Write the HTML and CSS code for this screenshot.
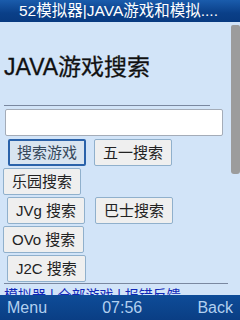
FILE: index.html
```html
<!DOCTYPE html>
<html>
<head>
<meta charset="utf-8">
<link rel="stylesheet" href="styles.css">
</head>
<body>
<div class="screen">
  <div class="titlebar">52模拟器|JAVA游戏和模拟....</div>
  <div class="viewport">
    <div class="content">
      <h1 class="heading">JAVA游戏搜索</h1>
      <div class="rule rule-top"></div>
      <div class="search-field"></div>
      <div class="row row-1">
        <span class="btn btn-focus">搜索游戏</span>
        <span class="btn btn-second">五一搜索</span>
      </div>
      <div class="row row-2">
        <span class="btn">乐园搜索</span>
      </div>
      <div class="row row-3">
        <span class="btn">JVg 搜索</span>
        <span class="btn btn-third">巴士搜索</span>
      </div>
      <div class="row row-4">
        <span class="btn">OVo 搜索</span>
      </div>
      <div class="row row-5">
        <span class="btn">J2C 搜索</span>
      </div>
      <div class="rule rule-bottom"></div>
      <div class="links"><span class="link">模拟器</span> | <span class="link">全部游戏</span> | <span class="link">报错反馈</span></div>
    </div>
    <div class="scrollbar"><div class="thumb"></div></div>
  </div>
  <div class="softkeys">
    <span class="key">Menu</span>
    <span class="clock">07:56</span>
    <span class="key">Back</span>
  </div>
</div>
</body>
</html>
```
FILE: styles.css
```css
html, body {
  margin: 0;
  padding: 0;
}
body {
  width: 240px;
  height: 320px;
  overflow: hidden;
  font-family: "Liberation Sans", "Noto Sans CJK SC", sans-serif;
  background: #d2e4f8;
}
.screen {
  width: 240px;
  height: 320px;
  display: flex;
  flex-direction: column;
}
.titlebar {
  height: 22px;
  flex: none;
  line-height: 22px;
  padding-left: 19px;
  font-size: 15.5px;
  color: #ffffff;
  background: linear-gradient(#1a5cac, #0a3f88 60%, #083a80);
  white-space: nowrap;
  overflow: hidden;
}
.viewport {
  flex: 1;
  min-height: 0;
  display: flex;
  overflow: hidden;
  background: #d2e4f8;
}
.content {
  flex: 1;
  display: flex;
  flex-direction: column;
  align-items: flex-start;
}
.content > * {
  flex-shrink: 0;
}
.heading {
  margin: 32px 0 0 4px;
  font-size: 23px;
  line-height: 26px;
  font-weight: normal;
  color: #111111;
  -webkit-text-stroke: 0.3px #111111;
}
.rule {
  height: 0;
  border-top: 1px solid #7a88a0;
}
.rule-top {
  margin: 25px 0 0 4px;
  width: 206px;
}
.search-field {
  margin: 3px 0 0 5px;
  width: 216px;
  height: 25px;
  background: #ffffff;
  border: 1px solid #a4acb8;
  border-radius: 2px;
}
.row {
  display: flex;
  height: 27px;
  margin-top: 2px;
}
.row-1 { margin-top: 3px; padding-left: 8px; }
.row-2 { padding-left: 3px; }
.row-3 { padding-left: 7px; }
.row-4 { padding-left: 3px; }
.row-5 { padding-left: 7px; }
.btn {
  display: block;
  height: 25px;
  line-height: 25px;
  padding: 0 8px;
  font-size: 15px;
  color: #222222;
  background: #efefef;
  border: 1px solid #90b0cc;
  border-radius: 2px;
  white-space: nowrap;
}
.btn-focus {
  height: 23px;
  line-height: 23px;
  padding: 0 7px;
  border: 2px solid #2a62aa;
  background: #d8e4f0;
  color: #35475a;
}
.btn-second { margin-left: 8px; }
.btn-third { margin-left: 10px; }
.rule-bottom {
  margin: 1px 0 0 4px;
  width: 224px;
}
.links {
  margin: 2px 0 0 4px;
  font-size: 14px;
  line-height: 18px;
  color: #1028b8;
  white-space: nowrap;
}
.link {
  color: #1028b8;
  text-decoration: underline;
}
.scrollbar {
  width: 9px;
  flex: none;
}
.thumb {
  margin-top: 3px;
  height: 149px;
  background: #9c9c9c;
  border-radius: 2px 2px 3px 3px;
}
.softkeys {
  height: 25px;
  flex: none;
  display: flex;
  justify-content: space-between;
  align-items: center;
  padding: 0 7px;
  font-size: 16px;
  color: #b2d0f0;
  background: linear-gradient(#0e4c98, #0a3e84);
}
```
